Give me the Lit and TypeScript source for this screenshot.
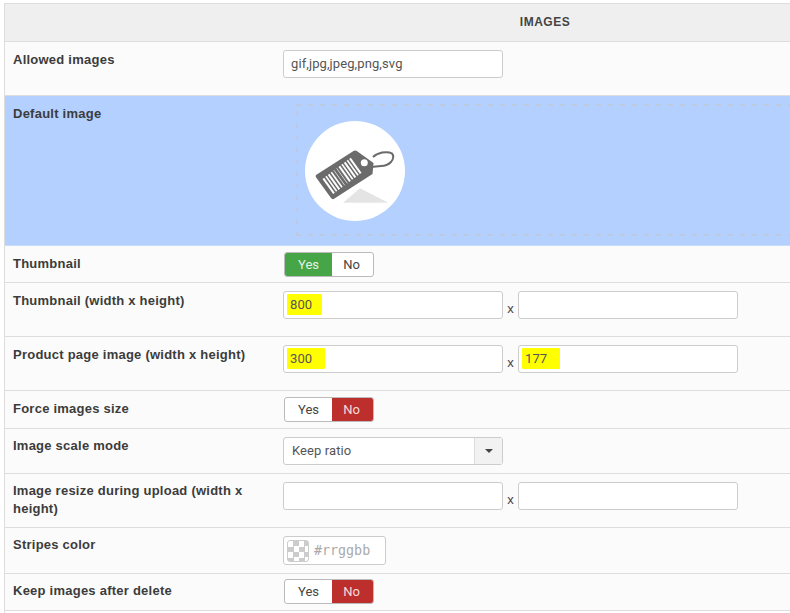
import { LitElement, html, css, svg } from "lit";
import { customElement } from "lit/decorators.js";

const bars = [0, 1, 2, 3, 4, 5, 6, 7, 8, 9, 10];

@customElement("app-root")
export class AppRoot extends LitElement {
  static styles = css`
    :host { display: block; width: 790px; height: 613px; overflow: hidden; background: #fff;
      font-family: "Liberation Sans", Arial, sans-serif; color: #333; }
    .panel { margin: 3px 0 0 4px; border-top: 1px solid #ddd; border-left: 1px solid #ddd; width: 786px; overflow: hidden; }
    .head { background: #efefef; border-bottom: 1px solid #ddd; display: flex; align-items: center; justify-content: center;
      padding-left: 296px; box-sizing: border-box; width: 786px; height: 38px;
      font-size: 12px; font-weight: bold; color: #444; letter-spacing: .5px; }
    .head span { margin-left: -2px; padding-bottom: 1px; }
    .row { display: flex; background: #fbfbfb; border-bottom: 1px solid #ddd; box-sizing: border-box; }
    .label { width: 278px; flex: none; padding: 9px 0 0 8px; box-sizing: border-box; font-size: 13px; font-weight: bold; line-height: 18px; color: #3c3c3c; letter-spacing: .24px; }
    .label.tight { padding-top: 8px; }
    .field { display: flex; align-items: flex-start; }
    .h54 { height: 54px; } .h38 { height: 38px; } .h37 { height: 37px; } .h45 { height: 45px; } .h46 { height: 46px; }
    .p8 { padding-top: 8px; } .p6 { padding-top: 6px; } .p5 { padding-top: 5px; }
    .inp { width: 220px; height: 28px; box-sizing: border-box; border: 1px solid #ccc; border-radius: 3px; background: #fff;
      font: 13px/26px Roboto, sans-serif; color: #555; padding: 0 7px; letter-spacing: .1px; }
    .x { font: 13px "Liberation Sans", Arial, sans-serif; color: #444; width: 15px; text-align: center; padding-top: 9px; line-height: 18px; }
    mark { background: #ffff00; color: #555; padding: 3px 10px 3px 3px; margin-left: -4px; border-radius: 1px; }
    mark.long { padding-right: 13px; }
    .sw { display: flex; height: 25px; margin-left: 1px; box-sizing: border-box; border: 1px solid #bbb; border-radius: 3px; background: #fff;
      font: 13px/23px Roboto, sans-serif; color: #444; overflow: hidden; }
    .sw span { text-align: center; box-sizing: border-box; }
    .a { width: 47px; } .b { width: 41px; padding-right: 2px; }
    .sw .on { background: #46a546; color: #e4f2e4; }
    .sw .off { background: #bd2f2c; color: #f5dcdc; }
    .select { width: 220px; height: 28px; box-sizing: border-box; border: 1px solid #ccc; border-radius: 3px; background: #fff; display: flex;
      font: 13px/26px Roboto, sans-serif; color: #555; }
    .select .t { flex: 1; padding-left: 8px; letter-spacing: .1px; }
    .select .c { width: 27px; border-left: 1px solid #ddd; background: #f2f2f2; display: flex; align-items: center; justify-content: center; }
    .tri { width: 0; height: 0; border: 4px solid transparent; border-top-color: #444; border-bottom: 0; }
    .color { width: 103px; height: 29px; box-sizing: border-box; border: 1px solid #ccc; border-radius: 3px; background: #fff; display: flex; align-items: center; padding-left: 3px; gap: 5px;
      font: 13.33px "DejaVu Sans Mono", monospace; color: #aaa; }
    .chk { width: 22px; height: 22px; border-radius: 3px; border: 1px solid #ccc; box-sizing: border-box;
      background: repeating-conic-gradient(#ccc 0 25%, #fff 0 50%) 0 0 / 11px 11px; }
    .blue { height: 150px; background: #b3d0ff; border-bottom: 1px solid #c9dcf8; }
    .zone { margin: 8px 0 0 13px; width: 500px; height: 132px; flex: none; box-sizing: border-box; padding: 17px 0 0 9px;
      background:
        repeating-linear-gradient(90deg, rgba(190,200,218,.8) 0 5px, transparent 5px 12px) left top / 100% 2px no-repeat,
        repeating-linear-gradient(90deg, rgba(190,200,218,.8) 0 5px, transparent 5px 12px) left bottom / 100% 2px no-repeat,
        repeating-linear-gradient(0deg, rgba(190,200,218,.7) 0 5px, transparent 5px 12px) left top / 2px 100% no-repeat; }
    .zone svg { display: block; }
    .space { height: 3px; }
  `;

  private tag() {
    return html`<svg width="100" height="100" viewBox="0 0 100 100" aria-hidden="true">
      <circle cx="50" cy="50" r="50" fill="#fff"></circle>
      <polygon points="55,67.300 83.300,81.700 38,81.700" fill="#e4e4e4"></polygon>
      <path d="M68 36 Q71 33 77 31.500 Q84 30.500 87 32.500 Q90 36 86 41 Q82 45 76 45 L66 46" fill="none" stroke="#6a6a6a" stroke-width="2"></path>
      <path d="M11 54 L48.500 30 Q50.500 29 52.500 30.500 L68.500 42 L67.500 53 L29.500 77.500 Q27.500 79 26 77 L11.500 57 Q10 55.500 11 54 Z" fill="#6b6b6b"></path>
      <circle cx="59.300" cy="41.700" r="3.500" fill="#fff"></circle>
      ${bars.map((i) => {
        const x = i * 2.67;
        const y = i * -2;
        const w = i === 4 || i === 5 ? 1 : i % 2 ? 1.6 : 2;
        const op = i === 4 || i === 5 ? 0.7 : 1;
        return svg`<line x1=${18.3 + x} y1=${57.3 + y} x2=${29 + x} y2=${72.3 + y} stroke="#fff" stroke-width=${w} opacity=${op}></line>`;
      })}
    </svg>`;
  }

  private sw(on: "yes" | "no") {
    return html`<div class="sw">
      <span class="a ${on === "yes" ? "on" : ""}">Yes</span>
      <span class="b ${on === "no" ? "off" : ""}">No</span>
    </div>`;
  }

  render() {
    return html`<div class="panel">
      <div class="head"><span>IMAGES</span></div>
      <div class="row h54">
        <div class="label">Allowed images</div>
        <div class="field p8"><div class="inp">gif,jpg,jpeg,png,svg</div></div>
      </div>
      <div class="row blue">
        <div class="label">Default image</div>
        <div class="zone">${this.tag()}</div>
      </div>
      <div class="row h37">
        <div class="label">Thumbnail</div>
        <div class="field p6">${this.sw("yes")}</div>
      </div>
      <div class="row h54">
        <div class="label">Thumbnail (width x height)</div>
        <div class="field p8">
          <div class="inp"><mark>800</mark></div><div class="x">x</div><div class="inp"></div>
        </div>
      </div>
      <div class="row h54">
        <div class="label">Product page image (width x height)</div>
        <div class="field p8">
          <div class="inp"><mark class="long">300</mark></div><div class="x">x</div><div class="inp"><mark class="long">177</mark></div>
        </div>
      </div>
      <div class="row h38">
        <div class="label">Force images size</div>
        <div class="field p6">${this.sw("no")}</div>
      </div>
      <div class="row h45">
        <div class="label tight">Image scale mode</div>
        <div class="field p8"><div class="select"><div class="t">Keep ratio</div><div class="c"><div class="tri"></div></div></div></div>
      </div>
      <div class="row h54">
        <div class="label tight">Image resize during upload (width x height)</div>
        <div class="field p8">
          <div class="inp"></div><div class="x">x</div><div class="inp"></div>
        </div>
      </div>
      <div class="row h46">
        <div class="label tight">Stripes color</div>
        <div class="field p8"><div class="color"><div class="chk"></div><span>#rrggbb</span></div></div>
      </div>
      <div class="row h37">
        <div class="label tight">Keep images after delete</div>
        <div class="field p5">${this.sw("no")}</div>
      </div>
      <div class="space"></div>
    </div>`;
  }
}
